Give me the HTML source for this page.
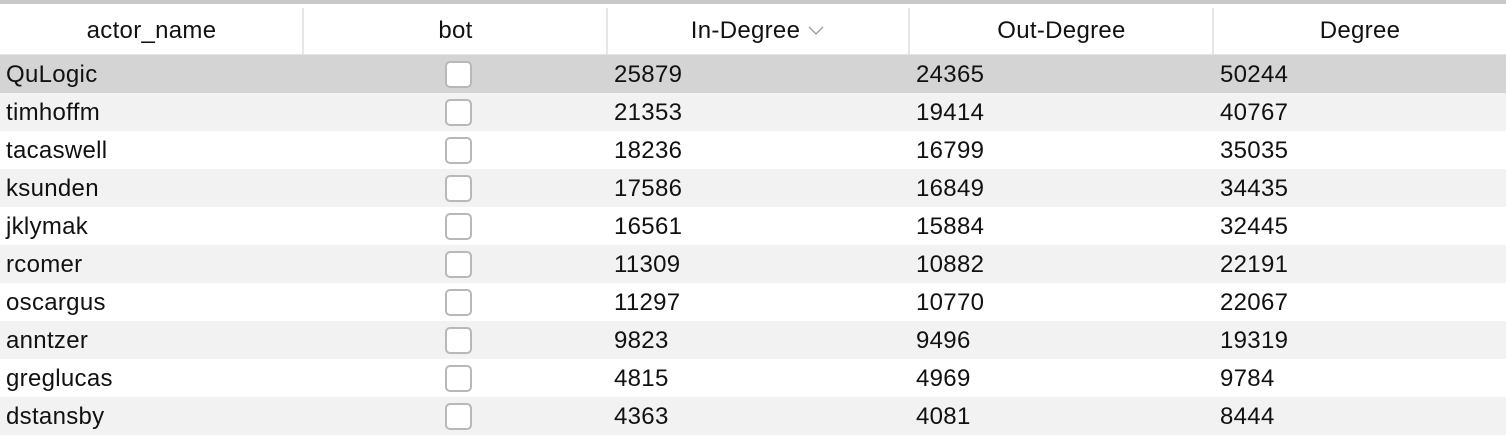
<!DOCTYPE html>
<html><head><style>
body{margin:0;width:1506px;height:440px;background:#fff;font-family:"Liberation Sans",Arial,sans-serif;overflow:hidden}
.top{position:absolute;left:0;top:0;width:1506px;height:4px;background:#c8c8c8}
.hdr{position:absolute;top:4px;left:0;width:1506px;height:50px;border-bottom:1px solid #e3e3e3}
.h{position:absolute;top:0;height:50px;line-height:54px;text-align:center;font-size:24px;letter-spacing:0.3px;color:#111}
.sep{position:absolute;top:4px;width:2px;height:46px;background:#e6e6e6}
.row{position:absolute;left:0;width:1506px;height:38px;font-size:24px;letter-spacing:0.3px;color:#111;line-height:40px}
.c{position:absolute;top:0}
.cb{position:absolute;left:445px;top:6px;width:23px;height:23px;border:2px solid #b8b8b8;border-radius:5px;background:#fff}
</style></head><body>
<div class="top"></div>
<div class="hdr">
<div class="h" style="left:0;width:303px">actor_name</div>
<div class="sep" style="left:302px"></div>
<div class="h" style="left:304px;width:303px">bot</div>
<div class="sep" style="left:606px"></div>
<div class="h" style="left:608px;width:300px">In-Degree <svg width="18" height="12" viewBox="0 0 18 12" style="vertical-align:2px"><path d="M2 3 L9 10 L16 3" fill="none" stroke="#999" stroke-width="1.3"/></svg></div>
<div class="sep" style="left:908px"></div>
<div class="h" style="left:910px;width:303px">Out-Degree</div>
<div class="sep" style="left:1212px"></div>
<div class="h" style="left:1214px;width:292px">Degree</div>
</div>
<div class="row" style="top:55px;background:#d4d4d4"><span class="c" style="left:6px">QuLogic</span><div class="cb"></div><span class="c" style="left:614px">25879</span><span class="c" style="left:916px">24365</span><span class="c" style="left:1220px">50244</span></div>
<div class="row" style="top:93px;background:#f2f2f2"><span class="c" style="left:6px">timhoffm</span><div class="cb"></div><span class="c" style="left:614px">21353</span><span class="c" style="left:916px">19414</span><span class="c" style="left:1220px">40767</span></div>
<div class="row" style="top:131px;background:#fff"><span class="c" style="left:6px">tacaswell</span><div class="cb"></div><span class="c" style="left:614px">18236</span><span class="c" style="left:916px">16799</span><span class="c" style="left:1220px">35035</span></div>
<div class="row" style="top:169px;background:#f2f2f2"><span class="c" style="left:6px">ksunden</span><div class="cb"></div><span class="c" style="left:614px">17586</span><span class="c" style="left:916px">16849</span><span class="c" style="left:1220px">34435</span></div>
<div class="row" style="top:207px;background:#fff"><span class="c" style="left:6px">jklymak</span><div class="cb"></div><span class="c" style="left:614px">16561</span><span class="c" style="left:916px">15884</span><span class="c" style="left:1220px">32445</span></div>
<div class="row" style="top:245px;background:#f2f2f2"><span class="c" style="left:6px">rcomer</span><div class="cb"></div><span class="c" style="left:614px">11309</span><span class="c" style="left:916px">10882</span><span class="c" style="left:1220px">22191</span></div>
<div class="row" style="top:283px;background:#fff"><span class="c" style="left:6px">oscargus</span><div class="cb"></div><span class="c" style="left:614px">11297</span><span class="c" style="left:916px">10770</span><span class="c" style="left:1220px">22067</span></div>
<div class="row" style="top:321px;background:#f2f2f2"><span class="c" style="left:6px">anntzer</span><div class="cb"></div><span class="c" style="left:614px">9823</span><span class="c" style="left:916px">9496</span><span class="c" style="left:1220px">19319</span></div>
<div class="row" style="top:359px;background:#fff"><span class="c" style="left:6px">greglucas</span><div class="cb"></div><span class="c" style="left:614px">4815</span><span class="c" style="left:916px">4969</span><span class="c" style="left:1220px">9784</span></div>
<div class="row" style="top:397px;background:#f2f2f2"><span class="c" style="left:6px">dstansby</span><div class="cb"></div><span class="c" style="left:614px">4363</span><span class="c" style="left:916px">4081</span><span class="c" style="left:1220px">8444</span></div>
</body></html>
